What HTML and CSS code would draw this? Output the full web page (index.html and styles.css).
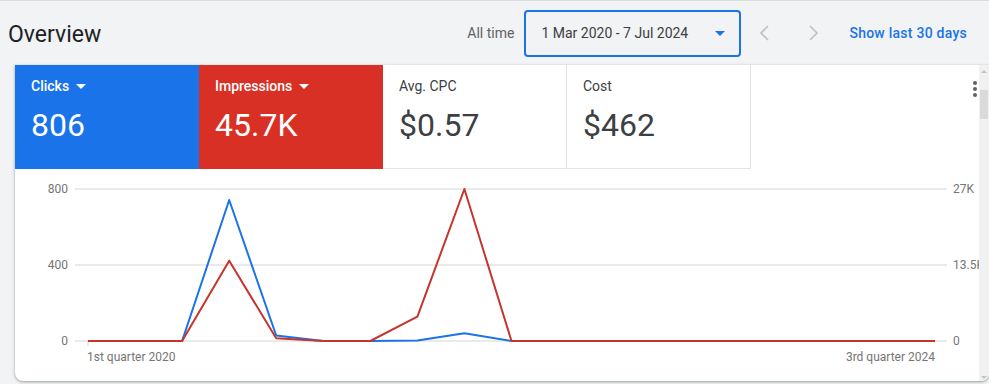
FILE: index.html
```html
<!DOCTYPE html>
<html>
<head>
<meta charset="utf-8">
<link rel="stylesheet" href="styles.css">
</head>
<body>
<div class="page">
  <header class="header">
    <h1 class="title">Overview</h1>
    <div class="controls">
      <span class="range-label">All time</span>
      <div class="date-box">
        <span class="date-text">1 Mar 2020 - 7 Jul 2024</span>
        <svg class="date-caret" width="10" height="5" viewBox="0 0 10 5"><polygon points="0,0 10,0 5,5" fill="#1a73e8"/></svg>
      </div>
      <button class="nav-btn" aria-label="Previous">
        <svg width="24" height="24" viewBox="0 0 24 24"><polyline points="15,5 8,12 15,19" fill="none" stroke="#bdc1c6" stroke-width="1.6"/></svg>
      </button>
      <button class="nav-btn" aria-label="Next">
        <svg width="24" height="24" viewBox="0 0 24 24"><polyline points="9,5 16,12 9,19" fill="none" stroke="#bdc1c6" stroke-width="1.6"/></svg>
      </button>
      <a class="show-link">Show last 30 days</a>
    </div>
  </header>

  <section class="card">
    <div class="card-content">
      <div class="tiles">
        <div class="tile tile-blue">
          <div class="tile-label">Clicks <svg class="tile-caret" width="10" height="5" viewBox="0 0 10 5"><polygon points="0,0 10,0 5,5" fill="#fff"/></svg></div>
          <div class="tile-value">806</div>
        </div>
        <div class="tile tile-red">
          <div class="tile-label">Impressions <svg class="tile-caret" width="10" height="5" viewBox="0 0 10 5"><polygon points="0,0 10,0 5,5" fill="#fff"/></svg></div>
          <div class="tile-value">45.7K</div>
        </div>
        <div class="tile tile-white">
          <div class="tile-label">Avg. CPC</div>
          <div class="tile-value">$0.57</div>
        </div>
        <div class="tile tile-white">
          <div class="tile-label">Cost</div>
          <div class="tile-value">$462</div>
        </div>
        <div class="tiles-spacer"></div>
        <div class="kebab">
          <span class="dot"></span><span class="dot"></span><span class="dot"></span>
        </div>
      </div>
      <svg class="chart" width="964" height="212" viewBox="0 0 964 212">
        <g stroke="#e3e3e3" stroke-width="1.5">
          <line x1="60" y1="20" x2="932" y2="20"/>
          <line x1="60" y1="96" x2="932" y2="96"/>
          <line x1="60" y1="172" x2="932" y2="172"/>
          <line x1="73" y1="172" x2="73" y2="177"/>
        </g>
        <g class="axis-text" text-anchor="end">
          <text x="53" y="24">800</text>
          <text x="53" y="100">400</text>
          <text x="53" y="176">0</text>
        </g>
        <g class="axis-text" text-anchor="start">
          <text x="938" y="24">27K</text>
          <text x="938" y="100">13.5K</text>
          <text x="938" y="176">0</text>
        </g>
        <text class="axis-text" x="72" y="192">1st quarter 2020</text>
        <text class="axis-text" x="920" y="192" text-anchor="end">3rd quarter 2024</text>
        <polyline fill="none" stroke="#1a73e8" stroke-width="2" stroke-linejoin="round"
          points="73,172 120.1,172 167.1,172 214.2,31 261.2,166.5 308.3,172 355.3,172 402.4,171.5 449.4,164.3 496.5,172 920,172"/>
        <polyline fill="none" stroke="#c5352b" stroke-width="2" stroke-linejoin="round"
          points="73,172 120.1,172 167.1,172 214.2,91.7 261.2,169.3 308.3,172 355.3,172 402.4,147.7 449.4,20 496.5,172 920,172"/>
      </svg>
    </div>
    <div class="scrollbar">
      <svg class="sb-arrow" width="10" height="6" viewBox="0 0 10 6"><polygon points="2,5 8,5 5,2" fill="#c4c4c4"/></svg>
      <div class="sb-thumb"></div>
      <div class="sb-fill"></div>
      <svg class="sb-arrow" width="10" height="6" viewBox="0 0 10 6"><polygon points="2,1 8,1 5,4" fill="#c4c4c4"/></svg>
    </div>
  </section>
</div>
</body>
</html>
```

FILE: styles.css
```css
html, body {
  margin: 0;
  padding: 0;
  background: #f1f3f4;
  overflow: hidden;
}
body {
  font-family: Roboto, "Liberation Sans", Arial, sans-serif;
  color: #3c4043;
  width: 989px;
  height: 384px;
}
.page {
  border-top: 1px solid #dadce0;
  height: 383px;
}
.header {
  display: flex;
  align-items: center;
  justify-content: space-between;
  height: 64px;
  padding: 0 22px 0 8px;
}
.title {
  margin: 0;
  font-size: 23px;
  font-weight: 400;
  color: #202124;
  letter-spacing: 0;
  padding-top: 2px;
}
.controls {
  display: flex;
  align-items: center;
  height: 64px;
}
.range-label {
  font-size: 14px;
  color: #5f6368;
  margin-right: 10px;
}
.date-box {
  box-sizing: border-box;
  width: 217px;
  height: 47px;
  border: 2px solid #1a73e8;
  border-radius: 4px;
  display: flex;
  align-items: center;
  justify-content: space-between;
  padding: 0 14px 0 15px;
  font-size: 14px;
  color: #3c4043;
}
.date-caret {
  display: block;
}
.nav-btn {
  width: 48px;
  height: 48px;
  border: 0;
  background: transparent;
  padding: 0;
  display: flex;
  align-items: center;
  justify-content: center;
}
.show-link {
  margin-left: 12px;
  font-size: 14px;
  font-weight: 500;
  letter-spacing: 0.25px;
  color: #1a73e8;
}

.card {
  margin-left: 15px;
  width: 974px;
  height: 316px;
  background: #fff;
  border-radius: 0 0 8px 8px;
  box-shadow: 0 1px 2px rgba(60,64,67,.3), 0 1px 3px 1px rgba(60,64,67,.15);
  display: flex;
  overflow: hidden;
}
.card-content {
  width: 964px;
  overflow: hidden;
  display: flex;
  flex-direction: column;
}
.tiles {
  display: flex;
  height: 104px;
}
.tile {
  box-sizing: border-box;
  width: 184px;
  height: 104px;
  padding: 11px 16px 0 16px;
}
.tile-blue {
  background: #1a73e8;
  color: #fff;
}
.tile-red {
  background: #d93025;
  color: #fff;
}
.tile-white {
  background: #fff;
  border-right: 1px solid #e3e3e3;
  border-bottom: 1px solid #e3e3e3;
  color: #3c4043;
}
.tile-label {
  font-size: 14px;
  line-height: 20px;
  height: 20px;
  display: flex;
  align-items: center;
  gap: 7px;
}
.tile-blue .tile-label, .tile-red .tile-label {
  font-weight: 500;
}
.tile-white .tile-label {
  color: #3c4043;
}
.tile-value {
  margin-top: 9px;
  font-size: 32px;
  line-height: 40px;
  font-weight: 400;
}
.tiles-spacer {
  flex: 1;
}
.kebab {
  width: 8px;
  padding-top: 16px;
  display: flex;
  flex-direction: column;
  align-items: center;
  gap: 2px;
}
.dot {
  width: 4px;
  height: 4px;
  border-radius: 50%;
  background: #5f6368;
}
.chart {
  display: block;
  flex: none;
}
.axis-text, .axis-text text {
  font-family: Roboto, "Liberation Sans", Arial, sans-serif;
  font-size: 12px;
  fill: #757575;
}
.scrollbar {
  width: 10px;
  background: #f1f1f1;
  display: flex;
  flex-direction: column;
  align-items: center;
}
.sb-arrow {
  display: block;
  margin-top: 3px;
}
.sb-thumb {
  width: 8px;
  height: 29px;
  margin-top: 16px;
  background: #dadada;
}
.sb-fill {
  flex: 1;
}
```
